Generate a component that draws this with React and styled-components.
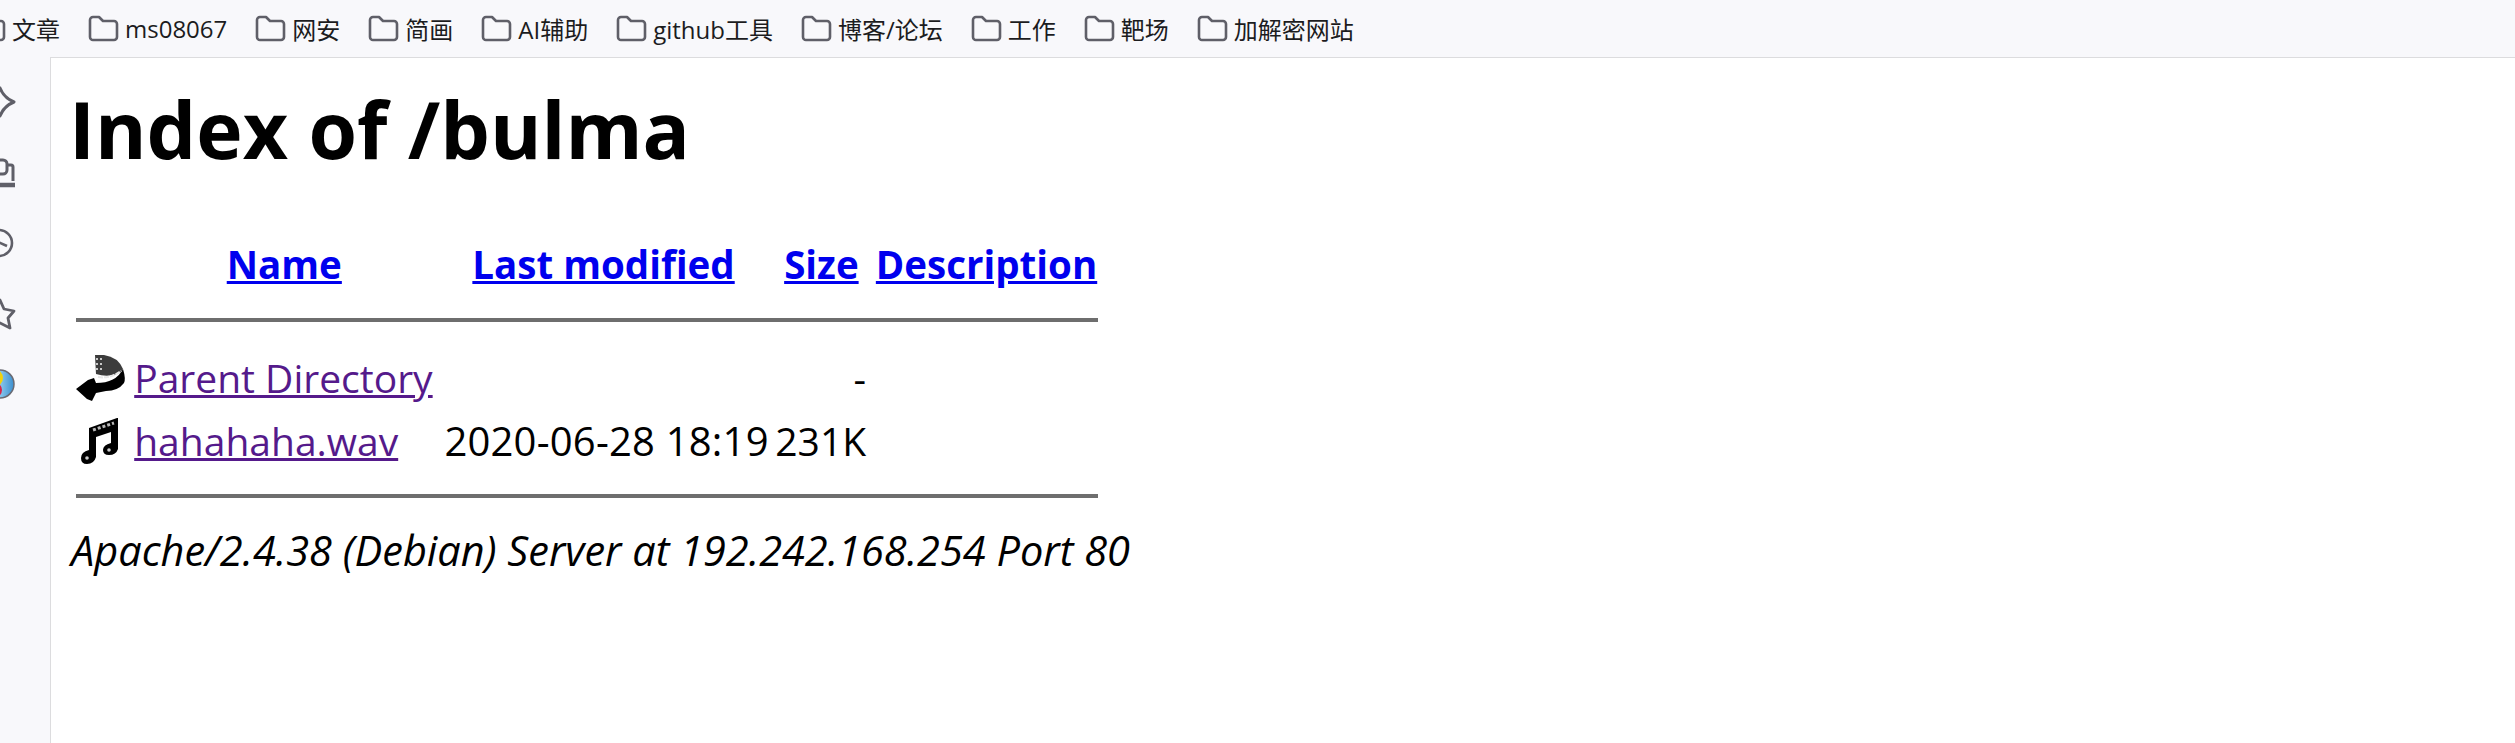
import React from 'react';
import styled, { createGlobalStyle } from 'styled-components';

const FONT = `"Open Sans", "Noto Sans CJK SC", sans-serif`;

const GlobalStyle = createGlobalStyle`
  html, body {
    margin: 0;
    height: 100%;
    background: #f8f8fb;
    overflow: hidden;
  }
`;

const Shell = styled.div`
  width: 2515px;
  height: 743px;
  display: flex;
  flex-direction: column;
  overflow: hidden;
  font-family: ${FONT};
`;

const BookmarkBar = styled.div`
  height: 57px;
  flex: none;
  display: flex;
  align-items: center;
  margin-left: -25px;
`;

const Bookmark = styled.div`
  display: flex;
  align-items: center;
  gap: 6px;
  margin-right: 28px;
  font-size: 24px;
  color: #1c1c1e;
  white-space: nowrap;
`;

const Body = styled.div`
  flex: 1;
  display: flex;
  min-height: 0;
`;

const SideBar = styled.div`
  width: 50px;
  flex: none;
  display: flex;
  flex-direction: column;
  align-items: flex-end;
  gap: 38.5px;
  padding: 29px 34px 0 0;
  box-sizing: border-box;
`;

const SideIcon = styled.svg`
  width: 32px;
  height: 32px;
  flex: none;
`;

const Page = styled.div`
  flex: 1;
  position: relative;
  background: #fff;
  border-top: 1px solid #dcdcde;
  border-left: 1px solid #dcdcde;
  padding: 0 21px;
  color: #000;
`;

const Title = styled.h1`
  margin: 19px 0 0 -3px;
  font-size: 78.5px;
  line-height: 104px;
  font-weight: 700;
`;

const Listing = styled.table`
  margin-top: 50px;
  table-layout: fixed;
  width: 1030px;
  border-collapse: separate;
  border-spacing: 4px;
  font-size: 39px;
`;

const Col = styled.col`
  width: ${(p) => p.$w}px;
`;

const HeadCell = styled.th`
  font-weight: 700;
  padding: 0 0 3px ${(p) => p.$pad || 0}px;
  text-align: center;
  height: 57px;
  font-size: 38.5px;
  white-space: nowrap;
`;

const Cell = styled.td`
  padding: 0;
  height: 59px;
  white-space: nowrap;
  text-align: ${(p) => (p.$right ? 'right' : 'left')};
`;

const DateCell = styled(Cell)`
  font-size: 40px;
  letter-spacing: 0.2px;
  text-align: right;
`;

const HeadLink = styled.a`
  color: #0000ee;
  text-decoration: underline;
`;

const FileLink = styled.a`
  color: #551a8b;
  text-decoration: underline;
`;

const RuleCell = styled.th`
  padding: 0;
`;

const Rule = styled.hr`
  margin: ${(p) => p.$top}px 0 ${(p) => p.$bottom}px;
  border: 0;
  height: 4px;
  background: #6e6e6e;
`;

const Footer = styled.address`
  font-size: 41.5px;
  line-height: 56px;
  font-style: italic;
  margin-top: 20px;
  margin-left: -1px;
`;

const BackSvg = styled.svg`
  display: block;
  width: 50px;
  height: 50px;
`;

const MusicSvg = styled.svg`
  display: block;
  width: 37px;
  height: 47px;
  margin-left: 5px;
`;

const FolderIcon = () => (
  <svg width="31" height="27" viewBox="0 0 31 27" fill="none" stroke="#5f5f68" strokeWidth="2.6" strokeLinejoin="round">
    <path d="M2 5 a3 3 0 0 1 3-3 h6 l4 4 h11 a3 3 0 0 1 3 3 v13 a3 3 0 0 1-3 3 H5 a3 3 0 0 1-3-3 Z" />
  </svg>
);

const BackIcon = () => (
  <BackSvg viewBox="0 0 50 50">
    <path d="M19 2 H28 Q42 4 47 16 L44 20 Q32 25 20 21 Z" fill="#3c3c3c" />
    <path d="M47 16 Q50 26 48 30 Q42 38 30 38 L20 40 L16 48 L11 46 L0 36 L12 27 L18 25 L20 30 Q40 30 47 16 Z" fill="#000" />
    <path d="M21 5v2M21 10v2M21 15v2M25 5v2M25 10v2M25 15v2" stroke="#c8c8c8" strokeWidth="2" />
    <path d="M22 24 Q34 26 45 18" stroke="#e8e8e8" strokeWidth="2" fill="none" strokeDasharray="5 1" />
  </BackSvg>
);

const MusicIcon = () => (
  <MusicSvg viewBox="0 0 37 47">
    <path d="M8 11 L36 1 H37 V32 Q35 38 28 38 Q22 38 22 33 Q22 28 30 26 V15 L15 20 V40 Q13 47 6 47 Q0 47 0 41 Q0 35 8 33 Z" fill="#000" />
    <path d="M12 13 L33 6" stroke="#b8b8b8" strokeWidth="3" strokeDasharray="3 2" />
    <circle cx="6" cy="41" r="1.8" fill="#ccc" />
    <circle cx="28" cy="33" r="1.8" fill="#ccc" />
  </MusicSvg>
);

const bookmarks = ['文章', 'ms08067', '网安', '简画', 'AI辅助', 'github工具', '博客/论坛', '工作', '靶场', '加解密网站'];

const App = () => (
  <Shell>
    <GlobalStyle />
    <BookmarkBar>
      {bookmarks.map((name) => (
        <Bookmark key={name}>
          <FolderIcon />
          {name}
        </Bookmark>
      ))}
    </BookmarkBar>
    <Body>
      <SideBar>
        <SideIcon viewBox="0 0 32 32" fill="none" stroke="#5f5f68" strokeWidth="3" strokeLinejoin="round">
          <path d="M16 2 Q20 12 30 16 Q20 20 16 30 Q12 20 2 16 Q12 12 16 2 Z" />
        </SideIcon>
        <SideIcon viewBox="0 0 32 32" fill="none" stroke="#5f5f68" strokeWidth="3" strokeLinejoin="round">
          <path d="M14 3 h5 a4 4 0 0 1 4 4 v6 a4 4 0 0 1-4 4 h-5" />
          <path d="M24 8 h3 a2 2 0 0 1 2 2 v14" />
          <path d="M14 28 h17" strokeWidth="4.5" />
        </SideIcon>
        <SideIcon viewBox="0 0 32 32" fill="none" stroke="#5f5f68" strokeWidth="2.6">
          <circle cx="15" cy="16" r="13" />
          <path d="M14 15 L23 19" />
        </SideIcon>
        <SideIcon viewBox="0 0 32 32" fill="none" stroke="#5f5f68" strokeWidth="2.8" strokeLinejoin="round">
          <path d="M16 2 L20 11 L30 13 L24 20 L26 30 L16 25 L6 30 L8 20 L2 13 L12 11 Z" />
        </SideIcon>
        <SideIcon viewBox="0 0 32 32">
          <defs>
            <linearGradient id="ballBlue" x1="0" x2="1" y1="0" y2="0">
              <stop offset="0.4" stopColor="#9ad2f2" />
              <stop offset="1" stopColor="#3b8fcf" />
            </linearGradient>
          </defs>
          <circle cx="16" cy="16" r="14" fill="url(#ballBlue)" stroke="#6a6a72" strokeWidth="1.5" />
          <circle cx="10" cy="10" r="9" fill="#f2d20c" />
          <circle cx="10" cy="22" r="8" fill="#d8264a" />
        </SideIcon>
      </SideBar>
      <Page>
        <Title>Index of /bulma</Title>
        <Listing>
          <colgroup>
            <Col $w={54} />
            <Col $w={299} />
            <Col $w={329} />
            <Col $w={93} />
            <Col $w={227} />
          </colgroup>
          <thead>
            <tr>
              <HeadCell />
              <HeadCell><HeadLink href="#">Name</HeadLink></HeadCell>
              <HeadCell><HeadLink href="#">Last modified</HeadLink></HeadCell>
              <HeadCell $pad={4}><HeadLink href="#">Size</HeadLink></HeadCell>
              <HeadCell $pad={5}><HeadLink href="#">Description</HeadLink></HeadCell>
            </tr>
            <tr>
              <RuleCell colSpan={5}><Rule $top={19} $bottom={22} /></RuleCell>
            </tr>
          </thead>
          <tbody>
            <tr>
              <Cell><BackIcon /></Cell>
              <Cell><FileLink href="#">Parent Directory</FileLink></Cell>
              <Cell />
              <Cell $right>-</Cell>
              <Cell />
            </tr>
            <tr>
              <Cell><MusicIcon /></Cell>
              <Cell><FileLink href="#">hahahaha.wav</FileLink></Cell>
              <DateCell>2020-06-28 18:19</DateCell>
              <Cell $right>231K</Cell>
              <Cell />
            </tr>
            <tr>
              <RuleCell colSpan={5}><Rule $top={20} $bottom={0} /></RuleCell>
            </tr>
          </tbody>
        </Listing>
        <Footer>Apache/2.4.38 (Debian) Server at 192.242.168.254 Port 80</Footer>
      </Page>
    </Body>
  </Shell>
);

export default App;
